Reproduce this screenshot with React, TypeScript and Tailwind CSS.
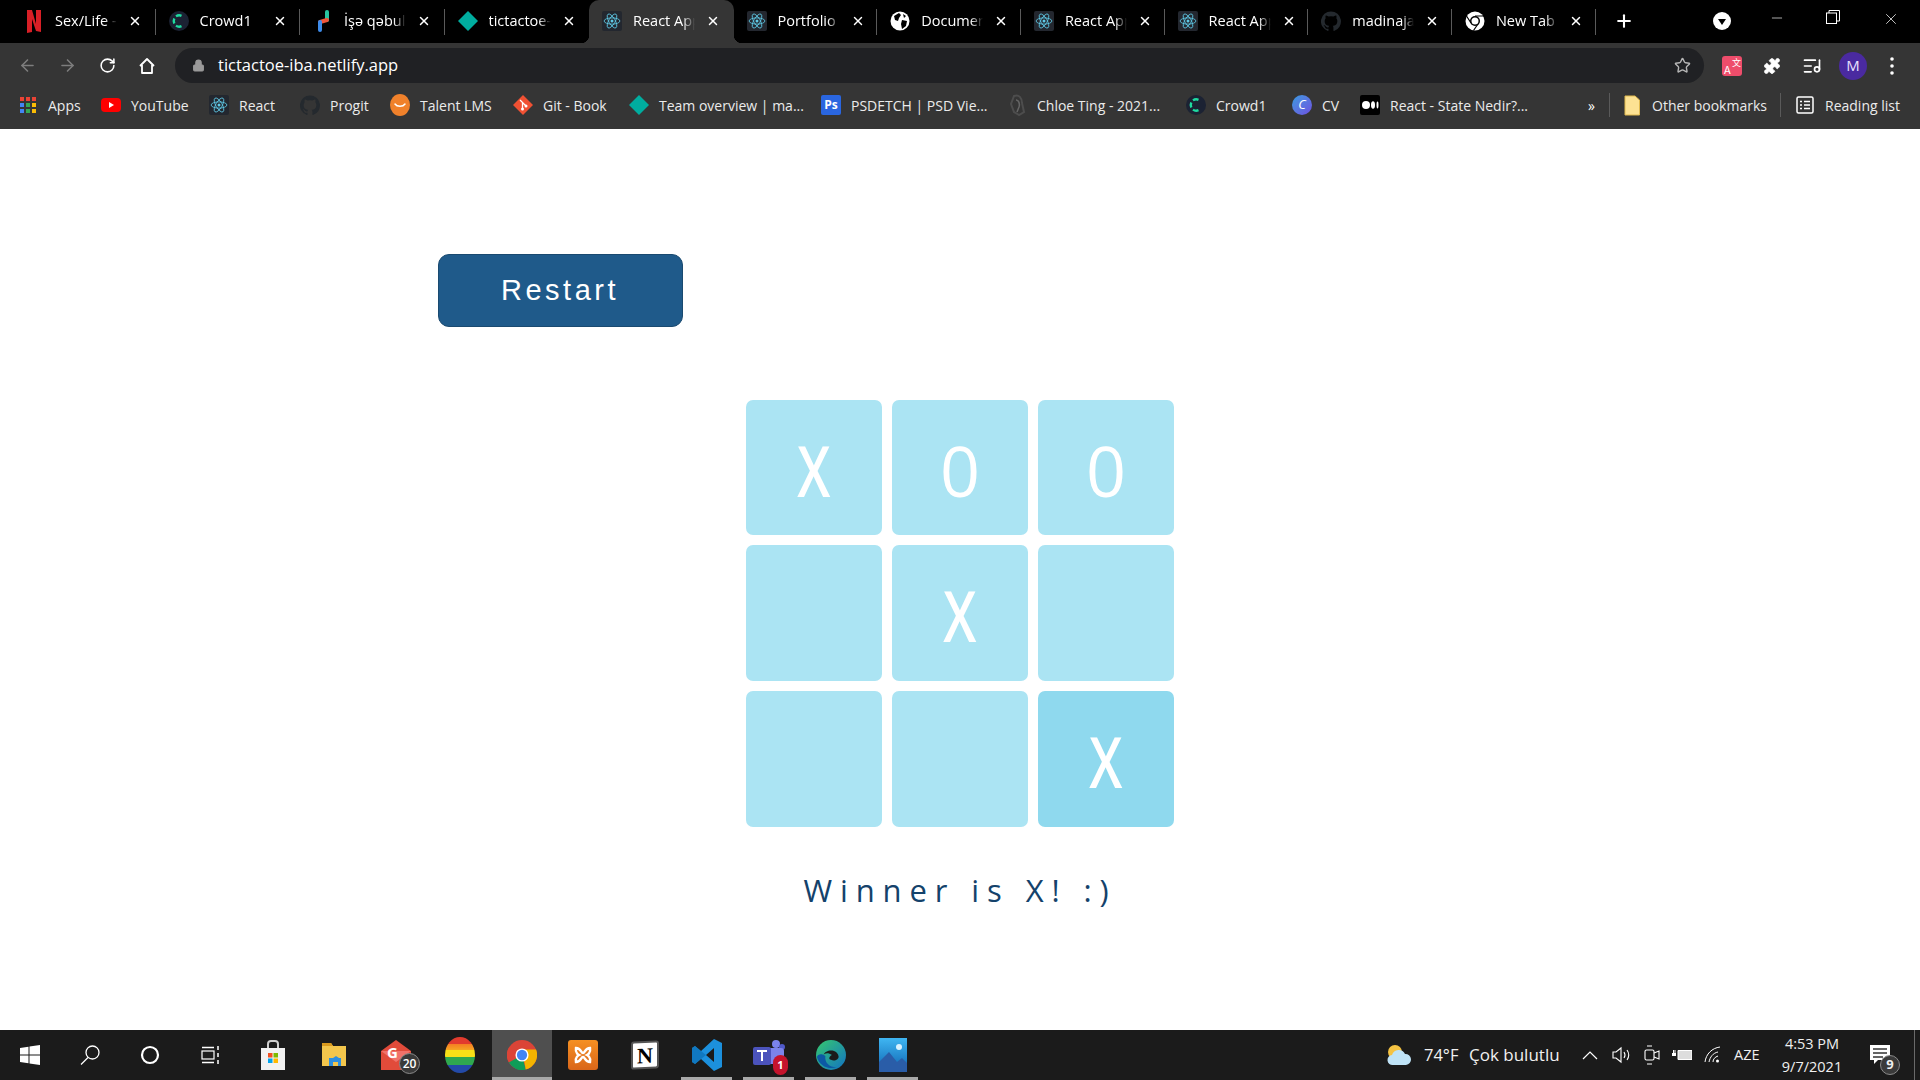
import React from "react";
import { ArrowLeft, ArrowRight, RotateCw, Lock, Star, Plus, X, Minus, ListMusic, Puzzle } from "lucide-react";

const ReactIcon = () => (
  <span className="flex h-5 w-5 items-center justify-center rounded-[2px] bg-[#23272f]">
    <svg viewBox="-12 -12 24 24" className="h-[18px] w-[18px]" fill="none" stroke="#5fc9e6" strokeWidth="1.1">
      <circle r="2" fill="#5fc9e6" stroke="none" />
      <ellipse rx="10.5" ry="4.2" />
      <ellipse rx="10.5" ry="4.2" transform="rotate(60)" />
      <ellipse rx="10.5" ry="4.2" transform="rotate(120)" />
    </svg>
  </span>
);
const Netflix = () => (
  <svg viewBox="0 0 20 24" className="h-6 w-5">
    <path d="M3 1h5l4 14V1h5v22l-5-1-4-12v13l-5 1z" fill="#d81f26" />
  </svg>
);
const Crowd = () => (
  <svg viewBox="0 0 20 20" className="h-5 w-5">
    <circle cx="10" cy="10" r="10" fill="#1b2233" />
    <path d="M12.5 4.8A5.6 5.6 0 0 0 7 5.4M5.3 7.5a6 6 0 0 0 0 5M7 14.6a5.6 5.6 0 0 0 5.500 .6" fill="none" stroke="#1fdba0" strokeWidth="2.400" />
  </svg>
);
const Rocket = () => (
  <svg viewBox="0 0 20 24" className="h-6 w-5" fill="none" strokeWidth="4" strokeLinecap="round">
    <path d="M14 3v8" stroke="#27c4a0" />
    <path d="M14 11 7 13" stroke="#f0563a" />
    <path d="M7 13v8" stroke="#3d8bea" />
  </svg>
);
const Diamond = () => (
  <svg viewBox="0 0 20 20" className="h-5 w-5">
    <path d="M10 0l10 10-10 10L0 10z" fill="#00ad9f" />
  </svg>
);
const Globe = () => (
  <svg viewBox="0 0 20 20" className="h-5 w-5">
    <circle cx="10" cy="10" r="9.500" fill="#fff" />
    <path d="M4 5l5-3 2 2-2 3-1 3-3-1zM12 9l5 1-1 5-4 3-1-5zM13 3l3 2-2 2z" fill="#000" />
  </svg>
);
const Github = () => (
  <svg viewBox="0 0 24 24" className="h-5 w-5" fill="#24292e">
    <path d="M12 .5a12 12 0 0 0-3.800 23.400c.6.100.800-.3.800-.6v-2c-3.300.7-4-1.600-4-1.600-.5-1.400-1.300-1.800-1.300-1.800-1.100-.7.100-.7.100-.7 1.200.1 1.800 1.200 1.800 1.200 1.100 1.800 2.800 1.300 3.500 1 .1-.8.400-1.300.8-1.600-2.700-.3-5.500-1.300-5.500-5.900 0-1.300.5-2.400 1.200-3.200-.1-.3-.5-1.500.1-3.200 0 0 1-.3 3.300 1.200a11.500 11.500 0 0 1 6 0c2.300-1.500 3.300-1.200 3.300-1.200.6 1.700.2 2.900.1 3.200.8.800 1.200 1.900 1.200 3.200 0 4.600-2.800 5.600-5.500 5.900.4.400.8 1.100.8 2.200v3.300c0 .3.2.7.800.6A12 12 0 0 0 12 .5z" />
  </svg>
);
const ChromeMono = () => (
  <svg viewBox="0 0 20 20" className="h-5 w-5">
    <circle cx="10" cy="10" r="9.500" fill="#fff" />
    <circle cx="10" cy="10" r="5" fill="#000" />
    <circle cx="10" cy="10" r="3.500" fill="#fff" />
    <path d="M10 5h9M6 12 1.500 5M13 13l-4.500 6.500" stroke="#000" strokeWidth="1.200" />
  </svg>
);
const Apps = () => (
  <span className="grid h-[17px] w-[17px] grid-cols-3 gap-[2px]">
    {["#ea4335", "#ea4335", "#ea4335", "#4285f4", "#34a853", "#fbbc05", "#4285f4", "#34a853", "#fbbc05"].map((c, i) => (
      <svg key={i} viewBox="0 0 4 4" className="h-[4px] w-[4px]">
        <rect width="4" height="4" fill={c} />
      </svg>
    ))}
  </span>
);
const YouTube = () => (
  <svg viewBox="0 0 20 14" className="h-[14px] w-5">
    <rect width="20" height="14" rx="4" fill="#f00" />
    <path d="M8 4l5 3-5 3z" fill="#fff" />
  </svg>
);
const Talent = () => (
  <svg viewBox="0 0 20 24" className="h-6 w-5">
    <ellipse cx="10" cy="12" rx="10" ry="11" fill="#f0812b" />
    <path d="M5 11c2 3 8 3 10 0" fill="none" stroke="#fff" strokeWidth="1.500" strokeLinecap="round" />
  </svg>
);
const GitIcon = () => (
  <svg viewBox="0 0 20 20" className="h-5 w-5">
    <path d="M10 0l10 10-10 10L0 10z" fill="#f05133" />
    <path d="M7 5l6 6M9.500 8v6" stroke="#fff" strokeWidth="1.300" />
    <circle cx="9.500" cy="14" r="1.500" fill="#fff" />
    <circle cx="13" cy="11" r="1.500" fill="#fff" />
  </svg>
);
const Ps = () => (
  <span className="flex h-5 w-5 items-center justify-center rounded-[2px] bg-[#2a66e0] text-[12px] font-bold text-white">Ps</span>
);
const Chloe = () => (
  <svg viewBox="0 0 20 24" className="h-6 w-5" fill="none" stroke="#4d4d4d" strokeWidth="2">
    <path d="M7 3c5-2 8 2 8 7l2 9-5 3-5-3-3-8z" />
    <path d="M9 7c3 0 4 4 3 7l-2 5" stroke="#666" strokeWidth="1.500" />
  </svg>
);
const CvIcon = () => (
  <span className="flex h-5 w-5 items-center justify-center rounded-full bg-gradient-to-br from-[#2f9ae0] to-[#6a4de0] text-[13px] italic text-white">C</span>
);
const Medium = () => (
  <span className="flex h-5 w-5 items-center justify-center gap-[1px] rounded-[2px] bg-black">
    <svg viewBox="0 0 17 8" className="h-2 w-[17px]" fill="#fff">
      <ellipse cx="4" cy="4" rx="4" ry="4" />
      <ellipse cx="11" cy="4" rx="2" ry="3.800" />
      <ellipse cx="15.500" cy="4" rx="1" ry="3.400" />
    </svg>
  </span>
);

const tabs: { icon: React.ReactNode; title: string; w: string; active?: boolean }[] = [
  { icon: <Netflix />, title: "Sex/Life - Netflix", w: "w-[144.5px]" },
  { icon: <Crowd />, title: "Crowd1", w: "w-[144.5px]" },
  { icon: <Rocket />, title: "İşə qəbul edilən", w: "w-[144.5px]" },
  { icon: <Diamond />, title: "tictactoe-iba", w: "w-[144.5px]" },
  { icon: <ReactIcon />, title: "React App", w: "w-[144.5px]", active: true },
  { icon: <ReactIcon />, title: "Portfolio", w: "w-[143.7px]" },
  { icon: <Globe />, title: "Document", w: "w-[143.7px]" },
  { icon: <ReactIcon />, title: "React App", w: "w-[143.7px]" },
  { icon: <ReactIcon />, title: "React App", w: "w-[143.7px]" },
  { icon: <Github />, title: "madinajal/tic", w: "w-[143.7px]" },
  { icon: <ChromeMono />, title: "New Tab", w: "w-[143.7px]" },
];

const bookmarks: { icon: React.ReactNode; label: string; w: string }[] = [
  { icon: <Apps />, label: "Apps", w: "w-[83px]" },
  { icon: <YouTube />, label: "YouTube", w: "w-[108px]" },
  { icon: <ReactIcon />, label: "React", w: "w-[91px]" },
  { icon: <Github />, label: "Progit", w: "w-[90px]" },
  { icon: <Talent />, label: "Talent LMS", w: "w-[123px]" },
  { icon: <GitIcon />, label: "Git - Book", w: "w-[116px]" },
  { icon: <Diamond />, label: "Team overview | ma...", w: "w-[192px]" },
  { icon: <Ps />, label: "PSDETCH | PSD Vie...", w: "w-[186px]" },
  { icon: <Chloe />, label: "Chloe Ting - 2021...", w: "w-[179px]" },
  { icon: <Crowd />, label: "Crowd1", w: "w-[106px]" },
  { icon: <CvIcon />, label: "CV", w: "w-[68px]" },
  { icon: <Medium />, label: "React - State Nedir?...", w: "w-[227px]" },
];

const Cell = ({ v, win }: { v?: string; win?: boolean }) => (
  <div
    className={`flex h-full w-[136px] items-center justify-center rounded-[7px] pt-[4px] font-['Open_Sans',sans-serif] text-[70px] leading-none text-white ${
      win ? "bg-[#8fd9ee]" : "bg-[#abe4f3]"
    }`}
  >
    {v === "X" ? <span className="inline-block scale-x-[0.76] font-semibold">X</span> : v}
  </div>
);

const TaskSlot = ({ children, w = "w-[62px]", on, active }: { children: React.ReactNode; w?: string; on?: boolean; active?: boolean }) => (
  <div className={`relative flex h-[50px] items-center justify-center ${w} ${active ? "bg-[#4f4f4f]" : ""}`}>
    {children}
    {on && <div className="absolute bottom-0 left-[5px] right-[6px] h-[3px] bg-[#a9a9a9]" />}
    {active && <div className="absolute bottom-0 left-0 right-0 h-[3px] bg-[#a9a9a9]" />}
  </div>
);

export default function App() {
  return (
    <div className="flex h-[1080px] w-[1920px] flex-col overflow-hidden bg-white font-['Open_Sans',sans-serif]">
      {/* tab strip */}
      <div className="flex h-[43px] shrink-0 items-stretch bg-black pl-[11px] text-[14.500px] text-white">
        {tabs.map((t, i) => (
          <div key={i} className={`relative flex shrink-0 items-center pb-[1px] pl-[13px] ${t.w} ${t.active ? "rounded-t-[10px] bg-[#353535]" : ""}`}>
            {t.active && (
              <>
                <div className="absolute bottom-0 left-[-8px] h-2 w-2 bg-[radial-gradient(circle_at_0_0,#000_8px,#353535_8.5px)]" />
                <div className="absolute bottom-0 right-[-8px] h-2 w-2 bg-[radial-gradient(circle_at_100%_0,#000_8px,#353535_8.5px)]" />
              </>
            )}
            <div className="flex w-5 shrink-0 justify-center">{t.icon}</div>
            <div className="ml-[11px] w-[62px] overflow-hidden whitespace-nowrap [mask-image:linear-gradient(to_right,#000_80%,transparent)]">{t.title}</div>
            <X className="ml-[11px] h-[14px] w-[14px] shrink-0" strokeWidth={2.500} />
            {!t.active && !tabs[i + 1]?.active && <div className="absolute right-0 top-[9px] h-[26px] w-px bg-[#5a5a5a]" />}
          </div>
        ))}
        <div className="flex w-[57px] shrink-0 items-center justify-center pb-[1px]">
          <Plus className="h-[20px] w-[20px]" strokeWidth={2.500} />
        </div>
        <div className="ml-[60px] flex w-[18px] shrink-0 items-center pb-[1px]">
          <svg viewBox="0 0 18 18" className="h-[18px] w-[18px]">
            <circle cx="9" cy="9" r="9" fill="#fff" />
            <path d="M5 7h8l-4 6z" fill="#000" />
          </svg>
        </div>
        <div className="flex items-start pt-[10px]">
          <Minus className="ml-[38px] h-[16px] w-[16px]" strokeWidth={1} />
          <svg viewBox="0 0 14 14" className="ml-[41px] h-[14px] w-[14px]" fill="none" stroke="#fff">
            <rect x="0.500" y="3" width="10" height="10.500" />
            <path d="M3 3V.5h10.500V11H11" />
          </svg>
          <X className="ml-[42px] h-[18px] w-[18px]" strokeWidth={1} />
        </div>
      </div>

      {/* toolbar */}
      <div className="flex h-[40px] shrink-0 bg-[#353535] pt-[5px]">
        <div className="flex w-[175px] items-center pl-[18px] text-white">
          <ArrowLeft className="h-[19px] w-[19px] text-[#7d7d7d]" strokeWidth={2} />
          <ArrowRight className="ml-[21px] h-[19px] w-[19px] text-[#7d7d7d]" strokeWidth={2} />
          <RotateCw className="ml-[22px] h-[17px] w-[17px]" strokeWidth={2.200} />
          <svg viewBox="0 0 18 18" className="ml-[22px] h-[18px] w-[18px]" fill="none" stroke="#fff" strokeWidth="1.800">
            <path d="M2 9l7-7 7 7M4 8v8h10V8" strokeLinejoin="round" />
          </svg>
        </div>
        <div className="flex h-[35px] w-[1529px] items-center rounded-[18px] bg-[#202124] pl-[17px] pr-[13px]">
          <Lock className="h-[13px] w-[13px] text-[#9a9a9a]" fill="#9a9a9a" strokeWidth={2} />
          <span className="ml-[13px] text-[16.500px] text-white">tictactoe-iba.netlify.app</span>
          <Star className="ml-auto h-[17px] w-[17px] text-[#b5b5b5]" strokeWidth={2} />
        </div>
        <div className="flex flex-1 items-center pl-[18px] text-white">
          <span className="relative block h-5 w-5 rounded-[3px] bg-[#ee4d6b] font-['Noto_Sans_CJK_SC',sans-serif] text-white">
            <span className="absolute bottom-[1px] left-[2px] text-[11px] leading-none">A</span>
            <span className="absolute right-[1px] top-[2px] text-[9px] leading-none">文</span>
          </span>
          <Puzzle className="ml-[21px] h-[18px] w-[18px]" fill="#fff" strokeWidth={1} />
          <ListMusic className="ml-[21px] h-[20px] w-[20px]" strokeWidth={2} />
          <span className="ml-[17px] flex h-[28px] w-[28px] items-center justify-center rounded-full bg-[#4a2aa0] text-[15px] text-[#e8e0ff]">M</span>
          <svg viewBox="0 0 4 18" className="ml-[23px] h-[18px] w-1" fill="#fff">
            <circle cx="2" cy="2" r="1.800" />
            <circle cx="2" cy="9" r="1.800" />
            <circle cx="2" cy="16" r="1.800" />
          </svg>
        </div>
      </div>

      {/* bookmarks */}
      <div className="flex h-[46px] shrink-0 items-center bg-[#353535] pb-[2px] pl-[18px] text-[14px] text-[#ebebeb]">
        {bookmarks.map((b, i) => (
          <div key={i} className={`flex shrink-0 items-center gap-[10px] whitespace-nowrap ${b.w}`}>
            <div className="flex w-5 shrink-0 justify-center">{b.icon}</div>
            <span>{b.label}</span>
          </div>
        ))}
        <span className="w-[22px] shrink-0 pl-[1px] text-[14px] text-white">»</span>
        <div className="h-[24px] w-px shrink-0 bg-[#5a5a5a]" />
        <svg viewBox="0 0 16 20" className="ml-[14px] h-[21px] w-[16px] shrink-0">
          <path d="M1 .5h10l4.500 4v15H1z" fill="#fde293" stroke="#e0b94f" />
        </svg>
        <span className="ml-[12px] w-[128px] shrink-0 whitespace-nowrap">Other bookmarks</span>
        <div className="h-[24px] w-px shrink-0 bg-[#5a5a5a]" />
        <svg viewBox="0 0 18 18" className="ml-[15px] h-[18px] w-[18px] shrink-0" fill="none" stroke="#fff" strokeWidth="1.500">
          <rect x="1" y="1" width="16" height="16" rx="1.500" />
          <path d="M4 5.500h2M8 5.500h6M4 9h2M8 9h6M4 12.500h2M8 12.500h6" />
        </svg>
        <span className="ml-[11px] whitespace-nowrap">Reading list</span>
      </div>

      {/* page */}
      <main className="flex-1 bg-white">
        <button className="ml-[438px] mt-[125px] block h-[73px] w-[245px] rounded-[11px] border border-[#1a4a70] bg-[#1f5a8a] pr-[1px] font-['Liberation_Sans',sans-serif] text-[29px] tracking-[3.500px] text-white">
          Restart
        </button>
        <div className="ml-[746px] mt-[73px] w-[428px]">
          <div className="grid grid-cols-[136px_136px_136px] grid-rows-[135px_136px_136px] gap-x-[10px] gap-y-[10px]">
            <Cell v="X" />
            <Cell v="0" />
            <Cell v="0" />
            <Cell />
            <Cell v="X" />
            <Cell />
            <Cell />
            <Cell />
            <Cell v="X" win />
          </div>
          <p className="mt-[41px] whitespace-nowrap text-center text-[31px] font-medium leading-[44px] tracking-[7.900px] text-[#14426b]">Winner is X! :)</p>
        </div>
      </main>

      {/* taskbar */}
      <div className="flex h-[50px] shrink-0 items-center bg-[#1b1b1b] text-white">
        <TaskSlot w="w-[60px]">
          <svg viewBox="0 0 20 20" className="h-5 w-5" fill="#fff">
            <path d="M0 3l8.500-1.200V9.500H0zM9.500 1.600 20 0v9.500H9.500zM0 10.500h8.500v7.700L0 17zM9.500 10.500H20V20L9.500 18.400z" />
          </svg>
        </TaskSlot>
        <TaskSlot w="w-[60px]">
          <svg viewBox="0 0 20 20" className="h-5 w-5" fill="none" stroke="#fff" strokeWidth="1.300">
            <circle cx="12.500" cy="7.500" r="6.500" />
            <path d="M8 12.500 1 19.500" />
          </svg>
        </TaskSlot>
        <TaskSlot w="w-[60px]">
          <svg viewBox="0 0 20 20" className="h-5 w-5" fill="none" stroke="#fff" strokeWidth="2.200">
            <circle cx="10" cy="10" r="8" />
          </svg>
        </TaskSlot>
        <TaskSlot w="w-[62px]">
          <svg viewBox="0 0 20 20" className="h-5 w-5" fill="none" stroke="#fff" strokeWidth="1.200">
            <rect x="1" y="6" width="12" height="8" />
            <path d="M1 2.500h12M1 17.500h12M17 1v4M17 8v4M17 15v4" strokeWidth="1.500" />
          </svg>
        </TaskSlot>
        <TaskSlot>
          <svg viewBox="0 0 24 30" className="h-[30px] w-6">
            <path d="M7 8V4a3 3 0 0 1 3-3h4a3 3 0 0 1 3 3v4" fill="none" stroke="#cfcfcf" strokeWidth="2" />
            <rect y="8" width="24" height="22" fill="#f2f2f2" />
            <rect x="7" y="13" width="4.500" height="4.500" fill="#f25022" />
            <rect x="12.500" y="13" width="4.500" height="4.500" fill="#7fba00" />
            <rect x="7" y="18.500" width="4.500" height="4.500" fill="#00a4ef" />
            <rect x="12.500" y="18.500" width="4.500" height="4.500" fill="#ffb900" />
          </svg>
        </TaskSlot>
        <TaskSlot>
          <svg viewBox="0 0 28 24" className="h-6 w-7">
            <path d="M1 0h9l2 3h13v20H1z" fill="#f3c64c" />
            <path d="M1 0h9l2 3H1z" fill="#d99a1e" />
            <path d="M8 23v-8h4l3-2 3 2h2v8h-3v-4h-5v4z" fill="#2d8fe0" />
          </svg>
        </TaskSlot>
        <TaskSlot>
          <div className="relative ml-[4px]">
            <svg viewBox="0 0 30 30" className="mr-[6px] h-[30px] w-[30px]">
              <path d="M0 11 15 0l15 11v19H0z" fill="#e14b3a" />
              <path d="M0 11 15 22l15-11" fill="#f0726a" />
            </svg>
            <span className="absolute left-[6px] top-[2px] text-[15px] font-bold leading-[20px] text-white">G</span>
            <span className="absolute left-[18px] top-[13px] flex h-[21px] w-[21px] items-center justify-center rounded-full border border-[#8a8a8a] bg-[#3a3a3a] text-[12px] font-semibold text-white">20</span>
          </div>
        </TaskSlot>
        <TaskSlot w="w-[64px]">
          <svg viewBox="0 0 30 36" className="h-9 w-[30px]">
            <defs>
              <linearGradient id="rb" x1="0" y1="0" x2="0" y2="1">
                <stop offset="0" stopColor="#e23b2e" />
                <stop offset="0.200" stopColor="#e23b2e" />
                <stop offset="0.200" stopColor="#f57f23" />
                <stop offset="0.360" stopColor="#f5a623" />
                <stop offset="0.360" stopColor="#f7e017" />
                <stop offset="0.560" stopColor="#f7e017" />
                <stop offset="0.560" stopColor="#2fa84f" />
                <stop offset="0.780" stopColor="#2fa84f" />
                <stop offset="0.780" stopColor="#234aa8" />
                <stop offset="1" stopColor="#234aa8" />
              </linearGradient>
            </defs>
            <ellipse cx="15" cy="18" rx="15" ry="18" fill="url(#rb)" />
          </svg>
        </TaskSlot>
        <TaskSlot w="w-[60px]" active>
          <svg viewBox="-16 -16 32 32" className="h-[34px] w-[30px]">
            <circle r="16" fill="#db4437" />
            <path d="M0 0-14 8A16 16 0 0 1-14-8z" fill="#db4437" />
            <path d="M-14 8A16 16 0 0 0 4 15.500L0 0z" fill="#0f9d58" />
            <path d="M4 15.500A16 16 0 0 0 15-6H0z" fill="#f4b400" />
            <circle r="7" fill="#fff" />
            <circle r="5.500" fill="#4285f4" />
          </svg>
        </TaskSlot>
        <TaskSlot>
          <div className="flex h-[30px] w-[30px] items-center justify-center rounded-[3px] bg-gradient-to-b from-[#f59022] to-[#d9661a]">
            <svg viewBox="0 0 20 20" className="h-5 w-5" fill="none" stroke="#fff" strokeWidth="2.500">
              <path d="M3 3c5 0 5 5 7 5s2-5 7-5c1 5-3 7-3 7s4 2 3 7c-5 0-5-5-7-5s-2 5-7 5c-1-5 3-7 3-7S2 8 3 3z" />
            </svg>
          </div>
        </TaskSlot>
        <TaskSlot>
          <div className="flex h-[28px] w-[28px] -skew-y-3 items-center justify-center rounded-[3px] border-2 border-[#555] bg-white font-['Liberation_Serif',serif] text-[22px] font-bold text-black">N</div>
        </TaskSlot>
        <TaskSlot on>
          <svg viewBox="0 0 30 32" className="h-[32px] w-[30px]">
            <path d="M22 0l8 4v24l-8 4-13-12-6 5-3-2V9l3-2 6 5zM22 9l-8 7 8 7z" fill="#1c90dd" fillRule="evenodd" />
            <path d="M22 0 9 12 3 7 0 9v14l3 2 6-5 5-4-5-4z" fill="#0b6db3" opacity="0.700" />
          </svg>
        </TaskSlot>
        <TaskSlot on>
          <div className="relative h-[34px] w-[34px]">
            <svg viewBox="0 0 34 34" className="h-[34px] w-[34px]">
              <circle cx="24" cy="6" r="4" fill="#7b83eb" />
              <circle cx="30" cy="9" r="3" fill="#5059c9" />
              <rect x="13" y="10" width="19" height="16" rx="3" fill="#7b83eb" />
              <rect x="1" y="9" width="18" height="18" rx="2" fill="#4b53bc" />
              <path d="M5 13h10M10 13v10" stroke="#fff" strokeWidth="2" />
            </svg>
            <span className="absolute bottom-[-3px] right-[-2px] flex h-[20px] w-[15px] items-center justify-center rounded-full bg-[#c4132c] text-[11px] font-bold">1</span>
          </div>
        </TaskSlot>
        <TaskSlot on>
          <svg viewBox="0 0 32 32" className="h-[32px] w-[30px]">
            <defs>
              <linearGradient id="ed" x1="0" y1="0" x2="1" y2="1">
                <stop offset="0" stopColor="#36c96e" />
                <stop offset="1" stopColor="#1272c4" />
              </linearGradient>
            </defs>
            <circle cx="16" cy="16" r="16" fill="url(#ed)" />
            <path d="M8 16c2-6 14-7 16 1 1 4-5 6-8 4-3 0-2-4 1-5-4-3-8-2-9 0z" fill="#1b1b1b" />
            <path d="M1 18c2 9 12 14 21 11-8 0-13-5-12-12C6 14 2 15 1 18z" fill="#0c59a4" />
          </svg>
        </TaskSlot>
        <TaskSlot on>
          <svg viewBox="0 0 28 34" className="h-[34px] w-[28px]">
            <defs>
              <linearGradient id="ph" x1="0" y1="0" x2="0" y2="1">
                <stop offset="0" stopColor="#3fb6f2" />
                <stop offset="1" stopColor="#0d62b0" />
              </linearGradient>
            </defs>
            <rect width="28" height="34" fill="url(#ph)" />
            <circle cx="20" cy="9" r="3" fill="#d9f2ff" />
            <path d="M0 24l10-10 8 10 5-4 5 5v9H0z" fill="#2a5da8" />
          </svg>
        </TaskSlot>

        <div className="flex flex-1 items-center pl-[462px] text-[#f0f0f0]">
          <svg viewBox="0 0 26 22" className="h-[22px] w-[26px]">
            <circle cx="9" cy="8" r="7" fill="#f5c342" />
            <path d="M7 21a5 5 0 0 1-1-10 7 7 0 0 1 13-1 5.500 5.500 0 0 1 1 11z" fill="#bfe3f7" />
          </svg>
          <span className="ml-[12px] w-[45px] whitespace-nowrap text-[16.500px]">74°F</span>
          <span className="w-[113px] whitespace-nowrap text-[17px]">Çok bulutlu</span>
          <svg viewBox="0 0 16 9" className="h-[9px] w-4" fill="none" stroke="#fff" strokeWidth="1.200">
            <path d="M1 8l7-7 7 7" />
          </svg>
          <svg viewBox="0 0 20 18" className="ml-[14px] h-[18px] w-[20px]" fill="none" stroke="#fff" strokeWidth="1.100">
            <path d="M1 6h3l5-4v14l-5-4H1zM12 6q2 3 0 6M15 4q3.500 5 0 10" />
          </svg>
          <svg viewBox="0 0 16 20" className="ml-[12px] h-[20px] w-[16px]" fill="none" stroke="#fff" strokeWidth="1.100">
            <rect x="1" y="5" width="9" height="10" rx="1.500" />
            <path d="M10 8l5-2v8l-5-2M3 1h5M3 19h5" />
          </svg>
          <svg viewBox="0 0 20 14" className="ml-[12px] h-[14px] w-[20px]" fill="#fff">
            <path d="M6 2.500h14v9H6z" stroke="#fff" fill="#ddd" />
            <path d="M0 5h4v3H0zM1 2h1v3H1zM2.500 2h1v3h-1z" />
          </svg>
          <svg viewBox="0 0 18 18" className="ml-[12px] h-[18px] w-[18px]" fill="none" stroke="#fff" strokeWidth="1">
            <path d="M1 16C2 8 8 2 16 1M5 16c1-5 4-9 9-10M9 16c0-3 2-5 5-6" />
            <circle cx="13.500" cy="15" r="1.500" fill="#fff" stroke="none" />
          </svg>
          <span className="ml-[12px] w-[45px] text-[14.500px]">AZE</span>
          <div className="flex w-[66px] flex-col items-center text-[14.500px] leading-[23px]">
            <span>4:53 PM</span>
            <span>9/7/2021</span>
          </div>
          <div className="relative ml-[25px]">
            <svg viewBox="0 0 20 20" className="h-5 w-5">
              <path d="M0 0h20v15H8l-4 4v-4H0z" fill="#fff" />
              <path d="M3 4h14M3 8h14M3 12h10" stroke="#333" strokeWidth="1.300" />
            </svg>
            <span className="absolute left-[10px] top-[10px] flex h-[20px] w-[20px] items-center justify-center rounded-full border border-[#8a8a8a] bg-[#3a3a3a] text-[13px] font-bold">9</span>
          </div>
          <div className="ml-auto mr-[5px] h-[50px] w-px bg-[#6a6a6a]" />
        </div>
      </div>
    </div>
  );
}
